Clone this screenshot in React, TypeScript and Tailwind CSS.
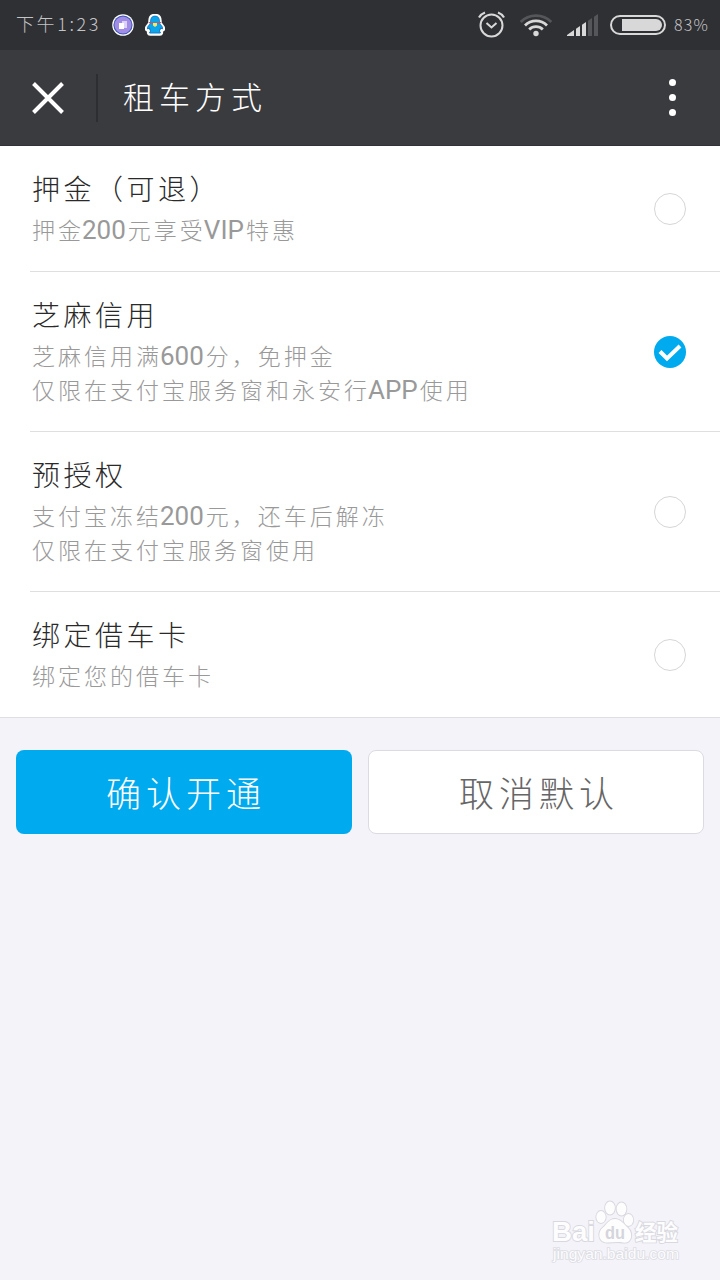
import { useState } from 'react'

interface RentOption {
  id: string
  title: string
  lines: string[]
}

const options: RentOption[] = [
  { id: 'deposit', title: '押金（可退）', lines: ['押金200元享受VIP特惠'] },
  {
    id: 'zhima',
    title: '芝麻信用',
    lines: ['芝麻信用满600分，免押金', '仅限在支付宝服务窗和永安行APP使用'],
  },
  {
    id: 'preauth',
    title: '预授权',
    lines: ['支付宝冻结200元，还车后解冻', '仅限在支付宝服务窗使用'],
  },
  { id: 'card', title: '绑定借车卡', lines: ['绑定您的借车卡'] },
]

// Latin letters and digits are set in Roboto, a little larger than the Chinese text
const MixedText = ({ text }: { text: string }) => (
  <>
    {text.split(/([A-Za-z0-9]+)/).map((part, i) =>
      /^[A-Za-z0-9]+$/.test(part) ? (
        <span
          key={i}
          className="-ml-[2px] mr-[2px] font-['Roboto',sans-serif] text-[26px] font-normal tracking-normal"
        >
          {part}
        </span>
      ) : (
        part
      )
    )}
  </>
)

const StatusBar = () => (
  <div className="flex h-[50px] items-center bg-[#2f3034] pl-4 pr-3 text-[#c4c4c6]">
    <span className="w-[94px] whitespace-nowrap pb-1 text-[18px] font-light tracking-[2.6px]">
      下午1:23
    </span>
    <svg className="ml-0.5 h-[22px] w-[22px]" viewBox="0 0 22 22">
      <circle cx="11" cy="11" r="10.8" fill="#fff" />
      <circle cx="11" cy="11" r="9.6" fill="#3d56b4" />
      <circle cx="11" cy="11" r="8.6" fill="#a18ce6" />
      <path d="M10 7h5v7h-5z" fill="#dcd2fa" />
      <path d="M7 9h5v6H7z" fill="#fff" />
    </svg>
    <svg className="ml-[11px] h-[22px] w-[20px]" viewBox="0 0 20 22">
      <path
        d="M10 1C6 1 4.5 4 4.5 7v2L1.500 13c-1 2 0 4 1.500 3l1 1c-1.500 1-1 3.500 1 3.500h10c2 0 2.500-2.500 1-3.500l1-1c1.500 1 2.500-1 1.500-3l-3-4V7c0-3-1.500-6-5.500-6z"
        fill="#0aa5ea"
        stroke="#fff"
        strokeWidth="2.5"
        strokeLinejoin="round"
      />
      <path
        d="M10 2C7 2 5.500 4 5.500 7v2L2.500 13v2l2-1 1 3-1 2h11l-1-2 1-3 2 1v-2l-3-4V7c0-3-1.500-5-4.500-5z"
        fill="#0aa5ea"
        stroke="#1d5cae"
        strokeWidth="0.6"
      />
      <path d="M4 8.500q6 1.500 12 0" fill="none" stroke="#d84a5c" strokeWidth="1.200" />
      <path d="M8 9h4v2.500l-2 1.500-2-1.500z" fill="#ffe45c" />
    </svg>

    <svg className="ml-auto h-[28px] w-[28px]" viewBox="0 0 28 28" fill="none" stroke="#d8d8d8">
      <circle cx="14.5" cy="14.5" r="11" strokeWidth="2" />
      <path d="M9.5 12l5 4.500 5-4.500" strokeWidth="2" />
      <path d="M2 6.500q2-3.500 6-5M27 6.500q-2-3.500-6-5" strokeWidth="2.2" />
    </svg>
    <svg className="ml-[14px] h-[24px] w-[34px]" viewBox="0 0 34 24" fill="none" strokeWidth="2.8">
      <path d="M1.7 9a21.500 21.500 0 0 1 30.600 0" stroke="#55565a" />
      <path d="M6 12.500a15.600 15.600 0 0 1 22 0" stroke="#d8d8d8" />
      <path d="M10.200 16.500a9.700 9.700 0 0 1 13.600 0" stroke="#d8d8d8" />
      <circle cx="17" cy="20.5" r="2.7" fill="#d8d8d8" />
    </svg>
    <svg className="ml-[14px] h-[22px] w-[31px]" viewBox="0 0 31 22">
      <path d="M0 22v-1l7-5v6zM9 22v-7.300l4-2.700v10zM15 22V10.700L19 8v14z" fill="#d8d8d8" />
      <path d="M21 22V6.700L25 4v18zM27 22V2.700L31 0v22z" fill="#55565a" />
    </svg>
    <svg className="ml-3 h-[20px] w-[56px]" viewBox="0 0 56 20">
      <rect x="1" y="1" width="54" height="18" rx="9" fill="none" stroke="#d8d8d8" strokeWidth="2" />
      <path d="M12 4h34a6 6 0 0 1 0 12H12z" fill="#d8d8d8" />
    </svg>
    <span className="ml-2 w-[34px] whitespace-nowrap pb-0.5 text-[16px] font-light tracking-[1.2px]">
      83%
    </span>
  </div>
)

const Header = () => (
  <header className="flex h-24 items-center border-b border-[#33303a] bg-[#3a3b3f] pl-8 pr-[44px] text-white">
    <button aria-label="关闭" className="pt-px">
      <svg className="h-8 w-8" viewBox="0 0 32 32" stroke="currentColor" strokeWidth="4">
        <path d="M1.500 1.500l29 29M30.500 1.500l-29 29" />
      </svg>
    </button>
    <div className="ml-8 h-12 w-0.5 bg-[#2d2e32]" />
    <h1 className="ml-[25px] whitespace-nowrap pb-1 text-[31px] font-light leading-10 tracking-[5px]">
      租车方式
    </h1>
    <button aria-label="更多" className="ml-auto flex flex-col gap-2">
      <span className="h-[7px] w-[7px] rounded-full bg-white" />
      <span className="h-[7px] w-[7px] rounded-full bg-white" />
      <span className="h-[7px] w-[7px] rounded-full bg-white" />
    </button>
  </header>
)

const Radio = ({ checked }: { checked: boolean }) =>
  checked ? (
    <svg className="h-8 w-8 shrink-0" viewBox="0 0 32 32">
      <circle cx="16" cy="16" r="16" fill="#00aaef" />
      <path d="M6 15.500l7 7L26 10" fill="none" stroke="#fff" strokeWidth="4" />
    </svg>
  ) : (
    <span className="h-8 w-8 shrink-0 rounded-full border border-[#d6d6d6] bg-white" />
  )

const Watermark = () => (
  <div className="absolute bottom-4 right-10 flex w-[128px] flex-col">
    <svg
      className="h-[44px] w-[128px] overflow-visible"
      viewBox="0 0 128 44"
      fill="#fdfdfe"
      stroke="#d8d8de"
      strokeWidth="1.8"
      paintOrder="stroke"
    >
      <text x="0" y="41" fontFamily="Liberation Sans" fontWeight="700" fontSize="28" textLength="43" lengthAdjust="spacingAndGlyphs">
        Bai
      </text>
      <ellipse cx="49" cy="17" rx="4.7" ry="6" />
      <ellipse cx="58" cy="8" rx="4.9" ry="6.5" />
      <ellipse cx="69.5" cy="9" rx="4.9" ry="6.5" />
      <ellipse cx="76.5" cy="20" rx="4.7" ry="6" />
      <path d="M63 19c-6 0-8 5-12 8.500-6 5-4.500 15 4 15 5 0 11-1 16 0 9 1.500 10.500-9 5-14.500C72 24.500 69 19 63 19z" />
      <text x="53" y="39" fill="#d5d5dc" stroke="none" fontFamily="Liberation Sans" fontWeight="700" fontSize="19" textLength="20" lengthAdjust="spacingAndGlyphs">
        du
      </text>
      <text x="83" y="40" fontFamily="Noto Sans CJK SC" fontWeight="700" fontSize="21.5">
        经验
      </text>
    </svg>
    <svg
      className="h-[20px] w-[128px] overflow-visible"
      viewBox="0 0 128 20"
      fill="#fcfcfe"
      stroke="#dddde3"
      strokeWidth="1.6"
      paintOrder="stroke"
    >
      <text x="1" y="15" fontFamily="Liberation Sans" fontSize="14" textLength="126" lengthAdjust="spacingAndGlyphs">
        jingyan.baidu.com
      </text>
    </svg>
  </div>
)

export default function App() {
  const [selected, setSelected] = useState('zhima')

  return (
    <div className="relative min-h-screen w-full bg-[#f4f3f9] font-['Noto_Sans_CJK_SC',sans-serif]">
      <StatusBar />
      <Header />

      <ul className="border-b border-[#dfdfe1] bg-white pl-[30px]">
        {options.map((option) => (
          <li
            key={option.id}
            onClick={() => setSelected(option.id)}
            className="flex items-center justify-between border-b border-[#dfdfe1] py-[21px] pr-[34px] last:border-b-0"
          >
            <div className="whitespace-nowrap pb-1 pl-0.5 font-light">
              <h2 className="text-[28px] leading-[42px] tracking-[3.5px] text-[#2a2a2a]">
                {option.title}
              </h2>
              <div className="mt-[3px] text-[23px] tracking-[3px] text-[#999]">
                {option.lines.map((line) => (
                  <p key={line} className="h-[34px] leading-[34px]">
                    <MixedText text={line} />
                  </p>
                ))}
              </div>
            </div>
            <Radio checked={selected === option.id} />
          </li>
        ))}
      </ul>

      <div className="flex gap-4 px-4 pt-8 text-[35px] font-light tracking-[5px]">
        <button className="h-[84px] w-[336px] rounded-lg bg-[#00aaef] pl-1 text-white">
          确认开通
        </button>
        <button className="h-[84px] w-[336px] rounded-lg border border-[#dcdce0] bg-white pl-1.5 text-[#666]">
          取消默认
        </button>
      </div>

      <Watermark />
    </div>
  )
}
